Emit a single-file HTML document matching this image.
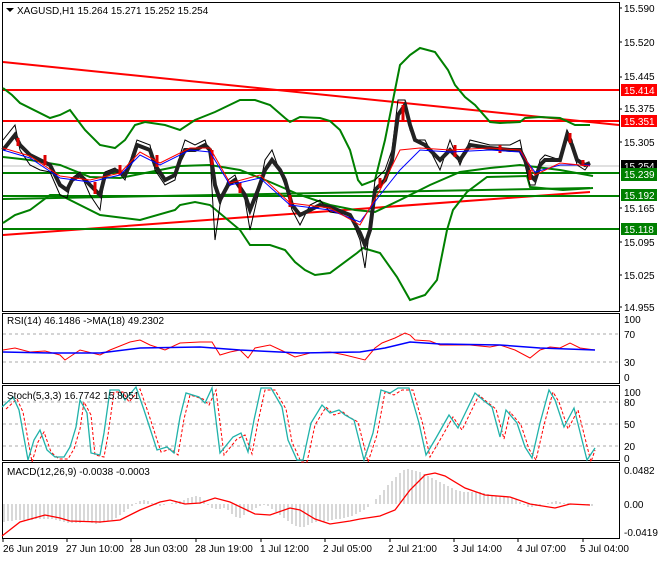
<!DOCTYPE html>
<html><head><meta charset="utf-8"><style>
body{margin:0;background:#fff;width:660px;height:560px;overflow:hidden;font-family:"Liberation Sans",sans-serif}
svg text{font-family:"Liberation Sans",sans-serif;font-size:10px;fill:#000}
</style></head><body>
<svg width="660" height="560" viewBox="0 0 660 560">
<rect width="660" height="560" fill="#fff"/>
<!-- panel frames -->
<g fill="none" stroke="#000" stroke-width="1">
<rect x="2.5" y="2.5" width="617" height="309"/>
<rect x="2.5" y="313.5" width="617" height="70"/>
<rect x="2.5" y="385.5" width="617" height="75"/>
<rect x="2.5" y="462.5" width="617" height="76"/>
</g>
<!-- main price lines -->
<line x1="3" y1="166" x2="619" y2="166" stroke="#c0c0c0"/>
<line x1="3" y1="62" x2="619" y2="125" stroke="#f00" stroke-width="2"/>
<line x1="3" y1="90" x2="619" y2="90" stroke="#f00" stroke-width="2"/>
<line x1="3" y1="121" x2="619" y2="121" stroke="#f00" stroke-width="2"/>
<line x1="3" y1="235" x2="590" y2="192" stroke="#f00" stroke-width="2"/>
<line x1="3" y1="173" x2="619" y2="173" stroke="#008000" stroke-width="2"/>
<line x1="3" y1="196" x2="619" y2="196" stroke="#008000" stroke-width="2"/>
<line x1="3" y1="229" x2="619" y2="229" stroke="#008000" stroke-width="2"/>
<line x1="3" y1="199" x2="590" y2="188" stroke="#008000" stroke-width="2"/>
<!-- bollinger -->
<g fill="none" stroke="#008000" stroke-width="2">
<polyline points="3,88 12,95 20,103 50,118 60,115 70,110 85,130 100,145 115,148 125,140 135,125 145,122 165,125 180,130 195,120 215,112 240,100 255,100 270,105 285,118 290,122 300,117 320,118 330,121 340,130 350,150 358,180 362,185 375,180 385,140 395,90 400,65 410,55 420,48 435,52 448,70 455,85 465,97 475,105 490,122 500,123 520,122 525,118 540,117 560,118 575,125 590,125"/>
<polyline points="3,223 15,215 30,210 50,195 60,195 100,215 140,220 175,210 180,205 195,202 210,205 240,230 250,245 270,245 285,250 295,262 305,270 315,275 330,273 357,253 363,248 380,253 397,277 410,300 425,295 437,280 447,230 453,210 467,192 487,177 527,176 530,187 563,190 593,188"/>
<polyline points="3,157 30,160 60,165 90,177 120,178 150,172 180,166 210,165 240,170 270,182 300,195 330,205 355,210 375,212 400,200 430,185 460,172 490,168 520,165 560,170 593,176"/>
</g>
<!-- price -->
<polyline fill="none" stroke="#000" stroke-width="1" points="3,140 15,125 20,150 30,165 40,170 50,172 60,195 67,198 72,178 80,172 90,195 100,210 105,172 115,168 125,180 132,155 137,140 150,145 155,170 165,185 175,180 180,155 185,140 195,145 205,140 210,155 215,240 220,205 228,180 235,175 245,200 250,230 258,195 265,160 272,150 280,172 285,185 292,210 300,225 310,205 320,200 330,212 350,215 360,240 365,268 370,225 375,180 385,170 392,150 398,100 405,100 410,130 415,140 425,140 440,170 450,140 460,165 470,140 490,145 510,145 520,140 525,165 530,185 535,185 540,160 545,155 560,160 567,130 572,140 577,165 585,170 590,163"/>
<polyline fill="none" stroke="#222" stroke-width="4" points="3,150 15,135 20,145 30,155 40,160 50,165 60,185 67,190 72,180 80,175 90,185 100,195 105,175 115,170 125,175 132,160 137,145 150,150 155,165 165,180 175,175 180,160 185,150 195,150 205,145 210,150 215,185 220,200 228,185 235,180 245,195 250,210 258,190 265,170 272,160 280,170 285,180 292,205 300,215 310,210 320,205 330,207 350,215 360,233 365,245 370,230 375,190 385,180 392,160 398,115 405,105 410,125 415,140 425,145 440,160 450,150 460,160 470,145 490,148 510,150 520,150 525,160 530,175 535,180 540,165 545,160 560,160 567,135 572,145 577,160 585,165 590,163"/>
<g stroke="#d00" stroke-width="3" fill="none">
<path d="M18 138v8M45 155v10M95 182v12M120 165v10M157 155v12M212 150v15M240 183v10M290 195v12M380 178v10M403 105v15M455 145v12M500 145v8M530 170v10M570 133v10M583 160v6"/>
</g>
<polyline fill="none" stroke="#00f" stroke-width="1" points="3,150 30,158 60,178 90,182 120,175 140,155 160,165 190,150 210,152 230,185 260,178 290,205 330,210 360,222 380,195 400,170 420,150 450,152 490,150 520,152 535,172 560,165 590,165"/>
<polyline fill="none" stroke="#f00" stroke-width="1" points="3,148 30,156 60,176 90,180 120,173 140,152 160,163 190,148 210,148 230,183 260,175 290,203 330,208 360,225 380,190 400,150 420,148 450,150 490,148 520,150 535,175 560,163 590,166"/>
<!-- price axis -->
<g>
<text x="624" y="12">15.590</text><text x="624" y="46">15.520</text><text x="624" y="80">15.445</text>
<text x="624" y="112">15.375</text><text x="624" y="146">15.305</text><text x="624" y="212">15.165</text>
<text x="624" y="246">15.095</text><text x="624" y="279">15.025</text><text x="624" y="311">14.955</text>
<path d="M619 8h3M619 42h3M619 77h3M619 109h3M619 142h3M619 208h3M619 242h3M619 275h3M619 307h3" stroke="#000"/>
<rect x="621" y="84" width="36" height="12" fill="#f00"/><text x="624" y="94" style="fill:#fff">15.414</text>
<rect x="621" y="115" width="36" height="12" fill="#f00"/><text x="624" y="125" style="fill:#fff">15.351</text>
<rect x="621" y="160" width="36" height="11" fill="#000"/><text x="624" y="170" style="fill:#fff">15.254</text>
<rect x="621" y="168" width="36" height="13" fill="#008000"/><text x="624" y="178" style="fill:#fff">15.239</text>
<rect x="621" y="189" width="36" height="12" fill="#008000"/><text x="624" y="199" style="fill:#fff">15.192</text>
<rect x="621" y="223" width="36" height="12" fill="#008000"/><text x="624" y="233" style="fill:#fff">15.118</text>
</g>
<path d="M6 8l4 4l4-4z" fill="#000"/>
<text x="17" y="14">XAGUSD,H1  15.264 15.271 15.252 15.254</text>
<!-- RSI -->
<g stroke="#aaa" stroke-dasharray="3,3"><line x1="3" y1="334" x2="619" y2="334"/><line x1="3" y1="362" x2="619" y2="362"/></g>
<polyline fill="none" stroke="#f00" points="3,350 15,348 30,352 45,351 60,355 65,360 80,350 100,355 110,350 130,342 140,340 150,345 165,350 180,343 200,342 212,342 220,355 230,352 240,350 248,358 255,348 270,345 285,352 295,357 310,353 330,352 345,355 365,360 375,348 382,343 395,338 405,333 410,335 415,340 430,341 440,345 455,345 470,345 490,347 500,345 515,350 530,358 540,350 550,347 560,348 570,343 580,348 595,350"/>
<polyline fill="none" stroke="#00f" stroke-width="1.5" points="3,352 50,353 100,353 140,348 200,347 240,350 300,353 360,352 385,348 410,342 440,344 500,345 540,348 595,350"/>
<text x="7" y="324">RSI(14) 46.1486  -&gt;MA(18) 49.2302</text>
<text x="624" y="323">100</text><text x="624" y="338">70</text><text x="624" y="366">30</text><text x="624" y="381">0</text>
<!-- Stoch -->
<g stroke="#aaa" stroke-dasharray="3,3"><line x1="3" y1="402" x2="619" y2="402"/><line x1="3" y1="424" x2="619" y2="424"/><line x1="3" y1="446" x2="619" y2="446"/></g>
<polyline fill="none" stroke="#f00" stroke-dasharray="3,2" transform="translate(4,2)" points="2,407 13,397 19,410 28,460 34,440 40,430 47,450 55,457 64,457 70,447 76,427 80,400 87,413 91,453 100,455 104,433 110,390 119,390 125,400 136,387 144,410 157,450 167,447 174,453 180,417 186,393 199,397 205,403 212,388 220,453 233,437 241,433 248,452 254,420 261,388 271,388 282,407 288,440 297,460 303,460 311,423 322,405 330,413 339,410 345,415 354,420 364,460 373,433 381,390 390,393 398,388 409,388 419,423 426,455 436,438 449,415 458,428 475,393 483,400 492,407 500,437 506,410 517,423 525,447 532,458 540,423 549,390 555,400 564,427 574,408 587,460 591,448"/>
<polyline fill="none" stroke="#20b2aa" stroke-width="1.3" points="2,407 13,397 19,410 28,460 34,440 40,430 47,450 55,457 64,457 70,447 76,427 80,400 87,413 91,453 100,455 104,433 110,390 119,390 125,400 136,387 144,410 157,450 167,447 174,453 180,417 186,393 199,397 205,403 212,388 220,453 233,437 241,433 248,452 254,420 261,388 271,388 282,407 288,440 297,460 303,460 311,423 322,405 330,413 339,410 345,415 354,420 364,460 373,433 381,390 390,393 398,388 409,388 419,423 426,455 436,438 449,415 458,428 475,393 483,400 492,407 500,437 506,410 517,423 525,447 532,458 540,423 549,390 555,400 564,427 574,408 587,460 595,448"/>
<text x="7" y="399">Stoch(5,3,3) 16.7742 15.8051</text>
<text x="624" y="396">100</text><text x="624" y="406">80</text><text x="624" y="428">50</text><text x="624" y="450">20</text><text x="624" y="462">0</text>
<!-- MACD -->
<path stroke="#b0b0b0" stroke-width="1" d="M4 504V522M8 504V521M12 504V521M16 504V520M20 504V520M24 504V520M28 504V520M32 504V520M36 504V519M40 504V519M44 504V519M48 504V519M52 504V519M56 504V520M60 504V521M64 504V522M68 504V523M72 504V523M76 504V523M80 504V523M84 504V522M88 504V522M92 504V523M96 504V524M100 504V523M104 504V522M108 504V521M112 504V520M116 504V518M120 504V515M124 504V512M128 504V509M132 504V506M136 504V503M140 504V501M144 504V500M148 504V501M152 504V503M156 504V505M160 504V506M164 504V505M168 504V504M172 504V503M176 504V502M180 504V501M184 504V500M188 504V498M192 504V497M196 504V496M200 504V497M204 504V500M208 504V505M212 504V508M216 504V509M220 504V509M224 504V508M228 504V510M232 504V514M236 504V517M240 504V518M244 504V515M248 504V512M252 504V510M256 504V508M260 504V506M264 504V505M268 504V506M272 504V509M276 504V512M280 504V515M284 504V518M288 504V521M292 504V524M296 504V526M300 504V527M304 504V527M308 504V525M312 504V523M316 504V522M320 504V521M324 504V522M328 504V521M332 504V520M336 504V519M340 504V519M344 504V518M348 504V517M352 504V516M356 504V514M360 504V512M364 504V510M368 504V507M372 504V504M376 504V499M380 504V495M384 504V490M388 504V485M392 504V481M396 504V477M400 504V473M404 504V470M408 504V469M412 504V470M416 504V471M420 504V472M424 504V474M428 504V476M432 504V478M436 504V480M440 504V482M444 504V484M448 504V486M452 504V488M456 504V490M460 504V491M464 504V492M468 504V492M472 504V492M476 504V492M480 504V492M484 504V493M488 504V494M492 504V495M496 504V496M500 504V497M504 504V497M508 504V497M512 504V498M516 504V499M520 504V502M524 504V505M528 504V507M532 504V507M536 504V506M540 504V505M544 504V504M548 504V503M552 504V502M556 504V501M560 504V502M564 504V503M568 504V503M572 504V504M576 504V504M580 504V504M584 504V505M588 504V505M592 504V506"/>
<polyline fill="none" stroke="#f00" stroke-width="1.3" points="2,536 20,522 45,515 60,518 70,521 100,522 120,520 140,510 160,502 170,500 185,504 200,503 215,498 230,502 255,514 270,515 290,508 300,510 315,519 330,524 350,521 360,519 380,516 395,510 410,490 425,475 435,473 445,476 465,488 485,495 510,497 530,504 555,508 570,504 590,505"/>
<text x="7" y="475">MACD(12,26,9) -0.0038 -0.0003</text>
<text x="624" y="474">0.0482</text><text x="624" y="508">0.00</text><text x="624" y="536">-0.0419</text>
<!-- dates -->
<path stroke="#000" d="M3 538v4M67 538v4M131 538v4M196 538v4M261 538v4M325 538v4M390 538v4M454 538v4M518 538v4M583 538v4"/>
<text x="3" y="552">26 Jun 2019</text><text x="66" y="552">27 Jun 10:00</text><text x="130" y="552">28 Jun 03:00</text>
<text x="195" y="552">28 Jun 19:00</text><text x="260" y="552">1 Jul 12:00</text><text x="323" y="552">2 Jul 05:00</text>
<text x="388" y="552">2 Jul 21:00</text><text x="453" y="552">3 Jul 14:00</text><text x="517" y="552">4 Jul 07:00</text>
<text x="580" y="552">5 Jul 04:00</text>
</svg>
</body></html>
